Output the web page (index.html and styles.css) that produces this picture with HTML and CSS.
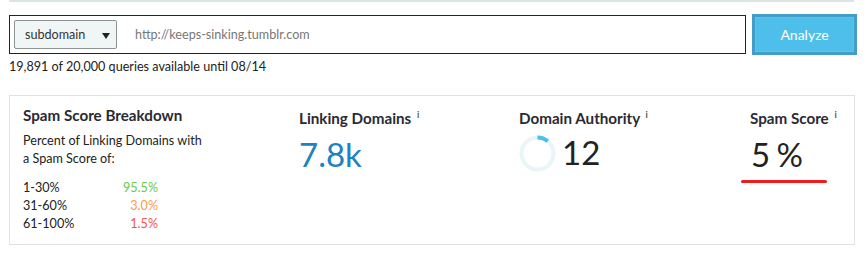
FILE: index.html
```html
<!DOCTYPE html>
<html>
<head>
<meta charset="utf-8">
<link rel="stylesheet" href="styles.css">
</head>
<body>
<div class="page">
  <div class="topline"></div>
  <div class="searchrow">
    <div class="inputbox">
      <div class="select">subdomain <span class="caret"></span></div>
      <div class="url">http://keeps-sinking.tumblr.com</div>
    </div>
    <button class="analyze"><span>Analyze</span></button>
  </div>
  <div class="quota">19,891 of 20,000 queries available until 08/14</div>
  <div class="card">
    <div class="col breakdown">
      <div class="title">Spam Score Breakdown</div>
      <div class="desc">Percent of Linking Domains with<br>a Spam Score of:</div>
      <div class="rows">
        <div class="row"><span>1-30%</span><span class="v green">95.5%</span></div>
        <div class="row"><span>31-60%</span><span class="v orange">3.0%</span></div>
        <div class="row"><span>61-100%</span><span class="v red">1.5%</span></div>
      </div>
    </div>
    <div class="col">
      <div class="title">Linking Domains <sup>i</sup></div>
      <div class="big blue">7.8k</div>
    </div>
    <div class="col">
      <div class="title">Domain Authority <sup>i</sup></div>
      <div class="da">
        <svg class="ring" width="37" height="37" viewBox="0 0 37 37">
          <circle cx="18.5" cy="18.5" r="16" fill="none" stroke="#e9f5f7" stroke-width="4"/>
          <path d="M18.5 2.5 A16 16 0 0 1 28.8 6.3" fill="none" stroke="#4dbfea" stroke-width="4"/>
        </svg>
        <div class="big">12</div>
      </div>
    </div>
    <div class="col spam">
      <div class="title">Spam Score <sup>i</sup></div>
      <div class="big">5 %</div>
      <div class="redline"></div>
    </div>
  </div>
</div>
</body>
</html>
```
FILE: styles.css
```css
* { box-sizing: border-box; }
body {
  margin: 0;
  background: #fff;
  font-family: Lato, "Open Sans", sans-serif;
  color: #222;
}
.page {
  padding: 0 11px 0 9px;
  width: 868px;
}
.topline {
  height: 2px;
  background: #dde5e4;
  width: 845px;
}
.searchrow {
  display: flex;
  align-items: center;
  margin-top: 12px;
  gap: 6px;
}
.inputbox {
  width: 738px;
  height: 39px;
  border: 1px solid #23232b;
  display: flex;
  align-items: center;
  padding-left: 4px;
}
.select {
  width: 103px;
  height: 29px;
  background: #f0f6f6;
  border: 1px solid #8b9393;
  border-radius: 2px;
  font-size: 12.6px;
  color: #333;
  display: flex;
  align-items: center;
  padding-left: 10px;
}
.caret {
  display: inline-block;
  margin-left: 17px;
  width: 0;
  height: 0;
  border-left: 4.5px solid transparent;
  border-right: 4.5px solid transparent;
  border-top: 6px solid #222;
  margin-top: 2px;
}
.url {
  margin-left: 18px;
  font-size: 12.6px;
  color: #777;
}
.analyze {
  width: 105px;
  height: 41px;
  background: #4dbfea;
  border: 3px solid #439dc6;
  border-radius: 0;
  color: #fff;
  font-family: Lato, sans-serif;
  font-size: 14px;
  padding: 0;
  display: flex;
  align-items: center;
  justify-content: center;
  box-shadow: inset 0 0 0 1px #5ac6ee;
}
.quota {
  font-size: 12.6px;
  line-height: 15px;
  margin-top: 4px;
  color: #222;
}
.card {
  margin-top: 21px;
  width: 846px;
  height: 150px;
  border: 1px solid #dde3e3;
  display: grid;
  grid-template-columns: 276px 220px 231px 1fr;
  padding: 10px 0 0 13px;
}
.col { position: relative; }
.title {
  font-size: 15.2px;
  font-weight: 700;
  color: #2a2a33;
  line-height: 18px;
}
.title sup {
  font-size: 9px;
  font-weight: 700;
  color: #555;
  vertical-align: 6px;
  margin-left: 2px;
}
.desc {
  font-size: 12.6px;
  line-height: 18px;
  margin-top: 8px;
}
.rows { margin-top: 11px; width: 135px; }
.row {
  display: flex;
  justify-content: space-between;
  font-size: 12.6px;
  line-height: 18px;
}
.green { color: #67cb4b; }
.orange { color: #ff9a45; }
.red { color: #f35650; }
.big {
  font-size: 33px;
  line-height: 40px;
  margin-top: 7px;
  color: #222;
}
.big.blue { color: #1c82c2; }
.da {
  display: flex;
  align-items: center;
  gap: 6px;
  margin-top: 5px;
}
.da .big { margin-top: 0; }
.ring { margin-top: 2px; }
.spam .big { margin-left: 1px; word-spacing: -2px; }
.redline {
  position: absolute;
  left: -9px;
  top: 74px;
  width: 86px;
  height: 3px;
  background: #f21b1b;
  border-radius: 2px;
}
```
